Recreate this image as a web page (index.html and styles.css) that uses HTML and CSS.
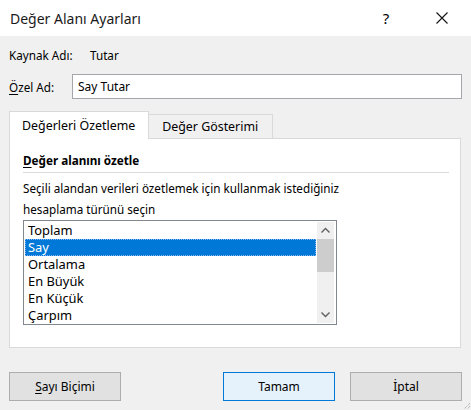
FILE: index.html
```html
<!DOCTYPE html>
<html lang="tr">
<head>
    <meta charset="UTF-8">
    <title>Değer Alanı Ayarları</title>
    <link rel="stylesheet" href="styles.css">
</head>
<body>
    <div class="dialog">
        <div class="titlebar">
            <span class="title">Değer Alanı Ayarları</span>
            <span class="help">?</span>
            <span class="close">
                <svg width="12" height="12" viewBox="0 0 12 12"><path d="M0.5 0.5 L11.5 11.5 M11.5 0.5 L0.5 11.5" stroke="#111" stroke-width="1.1" fill="none"/></svg>
            </span>
        </div>

        <div class="content">
            <div class="row source">
                <span class="label">Kaynak Adı:</span>
                <span>Tutar</span>
            </div>

            <div class="row custom">
                <label class="label" for="name"><u>Ö</u>zel Ad:</label>
                <input type="text" id="name" value="Say Tutar">
            </div>

            <div class="tabs">
                <div class="tab active">Değerleri Özetleme</div>
                <div class="tab">Değer Gösterimi</div>
            </div>

            <div class="panel">
                <div class="panel-title"><u>D</u>eğer alanını özetle</div>
                <div class="desc">Seçili alandan verileri özetlemek için kullanmak istediğiniz<br>hesaplama türünü seçin</div>

                <div class="listbox">
                    <ul class="items">
                        <li>Toplam</li>
                        <li class="selected">Say</li>
                        <li>Ortalama</li>
                        <li>En Büyük</li>
                        <li>En Küçük</li>
                        <li>Çarpım</li>
                    </ul>
                    <div class="scrollbar">
                        <svg class="arrow" width="17" height="17" viewBox="0 0 17 17"><path d="M4.5 10.5 L8.5 6.5 L12.5 10.5" stroke="#606060" stroke-width="1.4" fill="none"/></svg>
                        <div class="track"><div class="thumb"></div></div>
                        <svg class="arrow" width="17" height="17" viewBox="0 0 17 17"><path d="M4.5 6.5 L8.5 10.5 L12.5 6.5" stroke="#606060" stroke-width="1.4" fill="none"/></svg>
                    </div>
                </div>
            </div>

            <div class="buttons">
                <button class="btn"><u>S</u>ayı Biçimi</button>
                <div class="spacer"></div>
                <button class="btn default">Tamam</button>
                <button class="btn">İptal</button>
            </div>
        </div>
        <svg class="grip" width="9" height="9" viewBox="0 0 9 9"><path d="M8 2 L2 8 M8 5 L5 8" stroke="#a0a0a0" stroke-width="1" stroke-dasharray="1 1" fill="none"/></svg>
    </div>
</body>
</html>
```

FILE: styles.css
```css
body {
    margin: 0;
    font-family: "Noto Sans", "Open Sans", sans-serif;
    font-size: 11.7px;
    color: #000;
    background-color: #f0f0f0;
}

.dialog {
    width: 471px;
    height: 410px;
    background-color: #f0f0f0;
    position: relative;
    overflow: hidden;
}

.titlebar {
    height: 36px;
    background-color: #fff;
    display: flex;
    align-items: center;
}

.title {
    flex: 1;
    padding-left: 10px;
    font-size: 14px;
    color: #1a1a1a;
}

.help {
    width: 46px;
    font-size: 15px;
    margin-right: 10px;
    text-align: center;
}

.close {
    width: 46px;
    display: flex;
    justify-content: center;
    margin-right: 6px;
}

.content {
    padding: 0 9px;
}

.row {
    display: flex;
    align-items: center;
}

.source {
    height: 38px;
}

.source .label {
    width: 81px;
}

.custom {
    height: 25px;
}

.custom .label {
    width: 63px;
}

u {
    text-decoration-thickness: 1px;
    text-underline-offset: 2px;
}

input {
    flex: 1;
    height: 25px;
    box-sizing: border-box;
    border: 1px solid #a5a5ab;
    padding: 0 5px;
    font-family: inherit;
    font-size: 12px;
    outline: none;
    background-color: #fff;
}

.tabs {
    display: flex;
    align-items: flex-end;
    margin-top: 12px;
    height: 27px;
}

.tab {
    height: 24px;
    padding: 0 14px 0 13px;
    border: 1px solid #d9d9d9;
    border-bottom: none;
    box-sizing: border-box;
    display: flex;
    align-items: center;
    background-color: #f0f0f0;
    margin-left: -1px;
    font-size: 12.4px;
}

.tab.active {
    height: 28px;
    background-color: #fff;
    margin-left: 0;
    margin-bottom: -1px;
    padding: 0 13px 0 12px;
    position: relative;
    z-index: 1;
}

.panel {
    height: 210px;
    width: 452px;
    box-sizing: border-box;
    background-color: #fff;
    border: 1px solid #d9d9d9;
    padding: 0 11px 0 13px;
}

.panel-title {
    font-weight: bold;
    height: 24px;
    padding-top: 9px;
    line-height: 24px;
    border-bottom: 1px solid #d9d9d9;
}

.desc {
    line-height: 21px;
    margin-top: 5px;
    height: 42px;
}

.listbox {
    width: 314px;
    height: 105px;
    box-sizing: border-box;
    border: 1px solid #828790;
    display: flex;
}

.items {
    list-style: none;
    margin: 0;
    padding: 1px;
    flex: 1;
    font-size: 12.9px;
}

.items li {
    height: 17px;
    line-height: 17px;
    padding-left: 3px;
    box-sizing: border-box;
}

.items li.selected {
    background-color: #0078d7;
    color: #fff;
    outline: 1px dotted #7fb6ff;
    outline-offset: -1px;
}

.scrollbar {
    width: 17px;
    margin: 1px 2px 1px 0;
    background-color: #f0f0f0;
    display: flex;
    flex-direction: column;
}

.arrow {
    display: block;
}

.track {
    flex: 1;
}

.thumb {
    height: 33px;
    background-color: #cdcdcd;
}

.buttons {
    display: flex;
    margin-top: 24px;
}

.spacer {
    flex: 1;
}

.btn {
    width: 112px;
    height: 29px;
    background-color: #e1e1e1;
    border: 1px solid #adadad;
    font-family: inherit;
    font-size: 12px;
    color: #000;
    padding: 0;
}

.btn.default {
    background-color: #e5f1fb;
    border-color: #0078d7;
    margin-right: 15px;
}

.grip {
    position: absolute;
    right: 0;
    bottom: 0;
}
```
